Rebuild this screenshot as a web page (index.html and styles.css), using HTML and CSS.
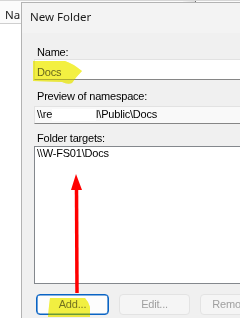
FILE: index.html
```html
<!DOCTYPE html>
<html>
<head>
<meta charset="utf-8">
<link rel="stylesheet" href="styles.css">
</head>
<body>
  <div class="explorer">
    <div class="col-header"><span class="col-name">Na</span><span class="col-divider"></span></div>
  </div>

  <div class="dialog">
    <div class="titlebar">New Folder</div>
    <div class="content">
      <div class="field-label">Name:</div>
      <div class="textbox name-box">Docs</div>

      <div class="field-label preview-label">Preview of namespace:</div>
      <div class="textbox preview-box"><span>\\re</span><span class="redact"></span><span>l\Public\Docs</span></div>

      <div class="field-label targets-label">Folder targets:</div>
      <div class="listbox">
        <div class="list-item">\\W-FS01\Docs</div>
      </div>

      <div class="buttons">
        <div class="btn btn-default">Add...</div>
        <div class="btn btn-disabled btn-edit">Edit...</div>
        <div class="btn btn-disabled">Remove...</div>
      </div>
    </div>
  </div>

  <svg class="annotations" width="240" height="318" viewBox="0 0 240 318">
    <g class="marker">
      <path d="M33,61 L65,61 Q72,63 82,71 Q76,77 72,83 Q68,85 62,82 L33,81 Z"/>
      <path d="M50,298 L85,298 Q88,301 90,307 L90,317 L48,317 L49,306 Z"/>
    </g>
    <g class="marker-tint">
      <path d="M33,61 L65,61 Q72,63 82,71 Q76,77 72,83 Q68,85 62,82 L33,81 Z"/>
      <path d="M50,298 L85,298 Q88,301 90,307 L90,317 L48,317 L49,306 Z"/>
    </g>
    <g class="arrow">
      <polygon points="76,174 82,190 71,190"/>
      <line x1="76.5" y1="188" x2="77" y2="293"/>
    </g>
  </svg>
</body>
</html>
```

FILE: styles.css
```css
html, body {
  margin: 0;
  padding: 0;
}

body {
  width: 240px;
  height: 318px;
  overflow: hidden;
  position: relative;
  background: #ffffff;
  font-family: "Liberation Sans", Arial, sans-serif;
  color: #000;
}

/* background explorer window */
.explorer {
  width: 240px;
}

.col-header {
  display: flex;
  align-items: flex-start;
  height: 24px;
  box-sizing: border-box;
  border-top: 1px solid #d6d6d6;
  border-bottom: 1px solid #cfcfcf;
  background: #fbfbfb;
  font-family: "Segoe UI", "Noto Sans", sans-serif;
  font-size: 11.5px;
  color: #1a1a1a;
}

.col-name {
  padding: 7px 0 0 5px;
  line-height: 14px;
}

.col-divider {
  margin-left: 163px;
  width: 12px;
  height: 2px;
  background: linear-gradient(to right, #f6f6f6, #dedede);
  border-right: 1px solid #6e6e6e;
}

/* dialog window */
.dialog {
  position: absolute;
  left: 21px;
  top: 2px;
  width: 262px;
  height: 330px;
  border-top: 1px solid #b3b3b3;
  border-left: 1px solid #b3b3b3;
  background: #f0f0f0;
}

.titlebar {
  height: 30px;
  line-height: 28px;
  padding-left: 8px;
  background: #f3f3f3;
  font-family: "Segoe UI", "Noto Sans", sans-serif;
  font-size: 11.5px;
  color: #1a1a1a;
}

.content {
  padding: 13px 0 0 12px;
  font-size: 11px;
  letter-spacing: -0.2px;
}

.field-label {
  padding-left: 3px;
  line-height: 13px;
}

.textbox {
  box-sizing: border-box;
  line-height: 13px;
  padding-left: 2px;
  white-space: nowrap;
  border: 1px solid #e2e2e2;
  border-bottom-color: #868686;
}

.name-box {
  height: 21px;
  padding-top: 6px;
  background: #ffffff;
}

.preview-label {
  margin-top: 10px;
}

.preview-box {
  margin-top: 3px;
  height: 18px;
  padding-top: 1px;
  background: #f9f9f9;
  display: flex;
  align-items: flex-start;
}

.redact {
  display: inline-block;
  width: 44px;
  height: 12px;
  margin-top: 1px;
  background: #ffffff;
}

.targets-label {
  margin-top: 8px;
}

.listbox {
  margin-top: 1px;
  height: 138px;
  box-sizing: border-box;
  border: 1px solid #84888d;
  background: #ffffff;
}

.list-item {
  padding-left: 2px;
  line-height: 13px;
}

.buttons {
  display: flex;
  gap: 10px;
  margin: 10px 0 0 2px;
}

.btn {
  box-sizing: border-box;
  width: 73px;
  height: 21px;
  line-height: 19px;
  text-align: center;
  border-radius: 4px;
  white-space: nowrap;
  overflow: hidden;
}

.btn-default {
  background: #fdfdfd;
  border: 1px solid #0a64c4;
  box-shadow: inset 0 0 0 0.6px #0a64c4;
  color: #1b1b1b;
}

.btn-disabled {
  background: #f5f5f5;
  border: 1px solid #e3e3e3;
  color: #a0a0a0;
}

.btn-edit {
  width: 71px;
}

/* annotation overlay */
.annotations {
  position: absolute;
  left: 0;
  top: 0;
  pointer-events: none;
}

.marker {
  mix-blend-mode: multiply;
}

.marker path {
  fill: #f3f142;
}

.marker-tint path {
  fill: #f3f142;
  opacity: 0.4;
}

.arrow polygon {
  fill: #ff0000;
}

.arrow line {
  stroke: #ff0000;
  stroke-width: 3.5;
}
```
